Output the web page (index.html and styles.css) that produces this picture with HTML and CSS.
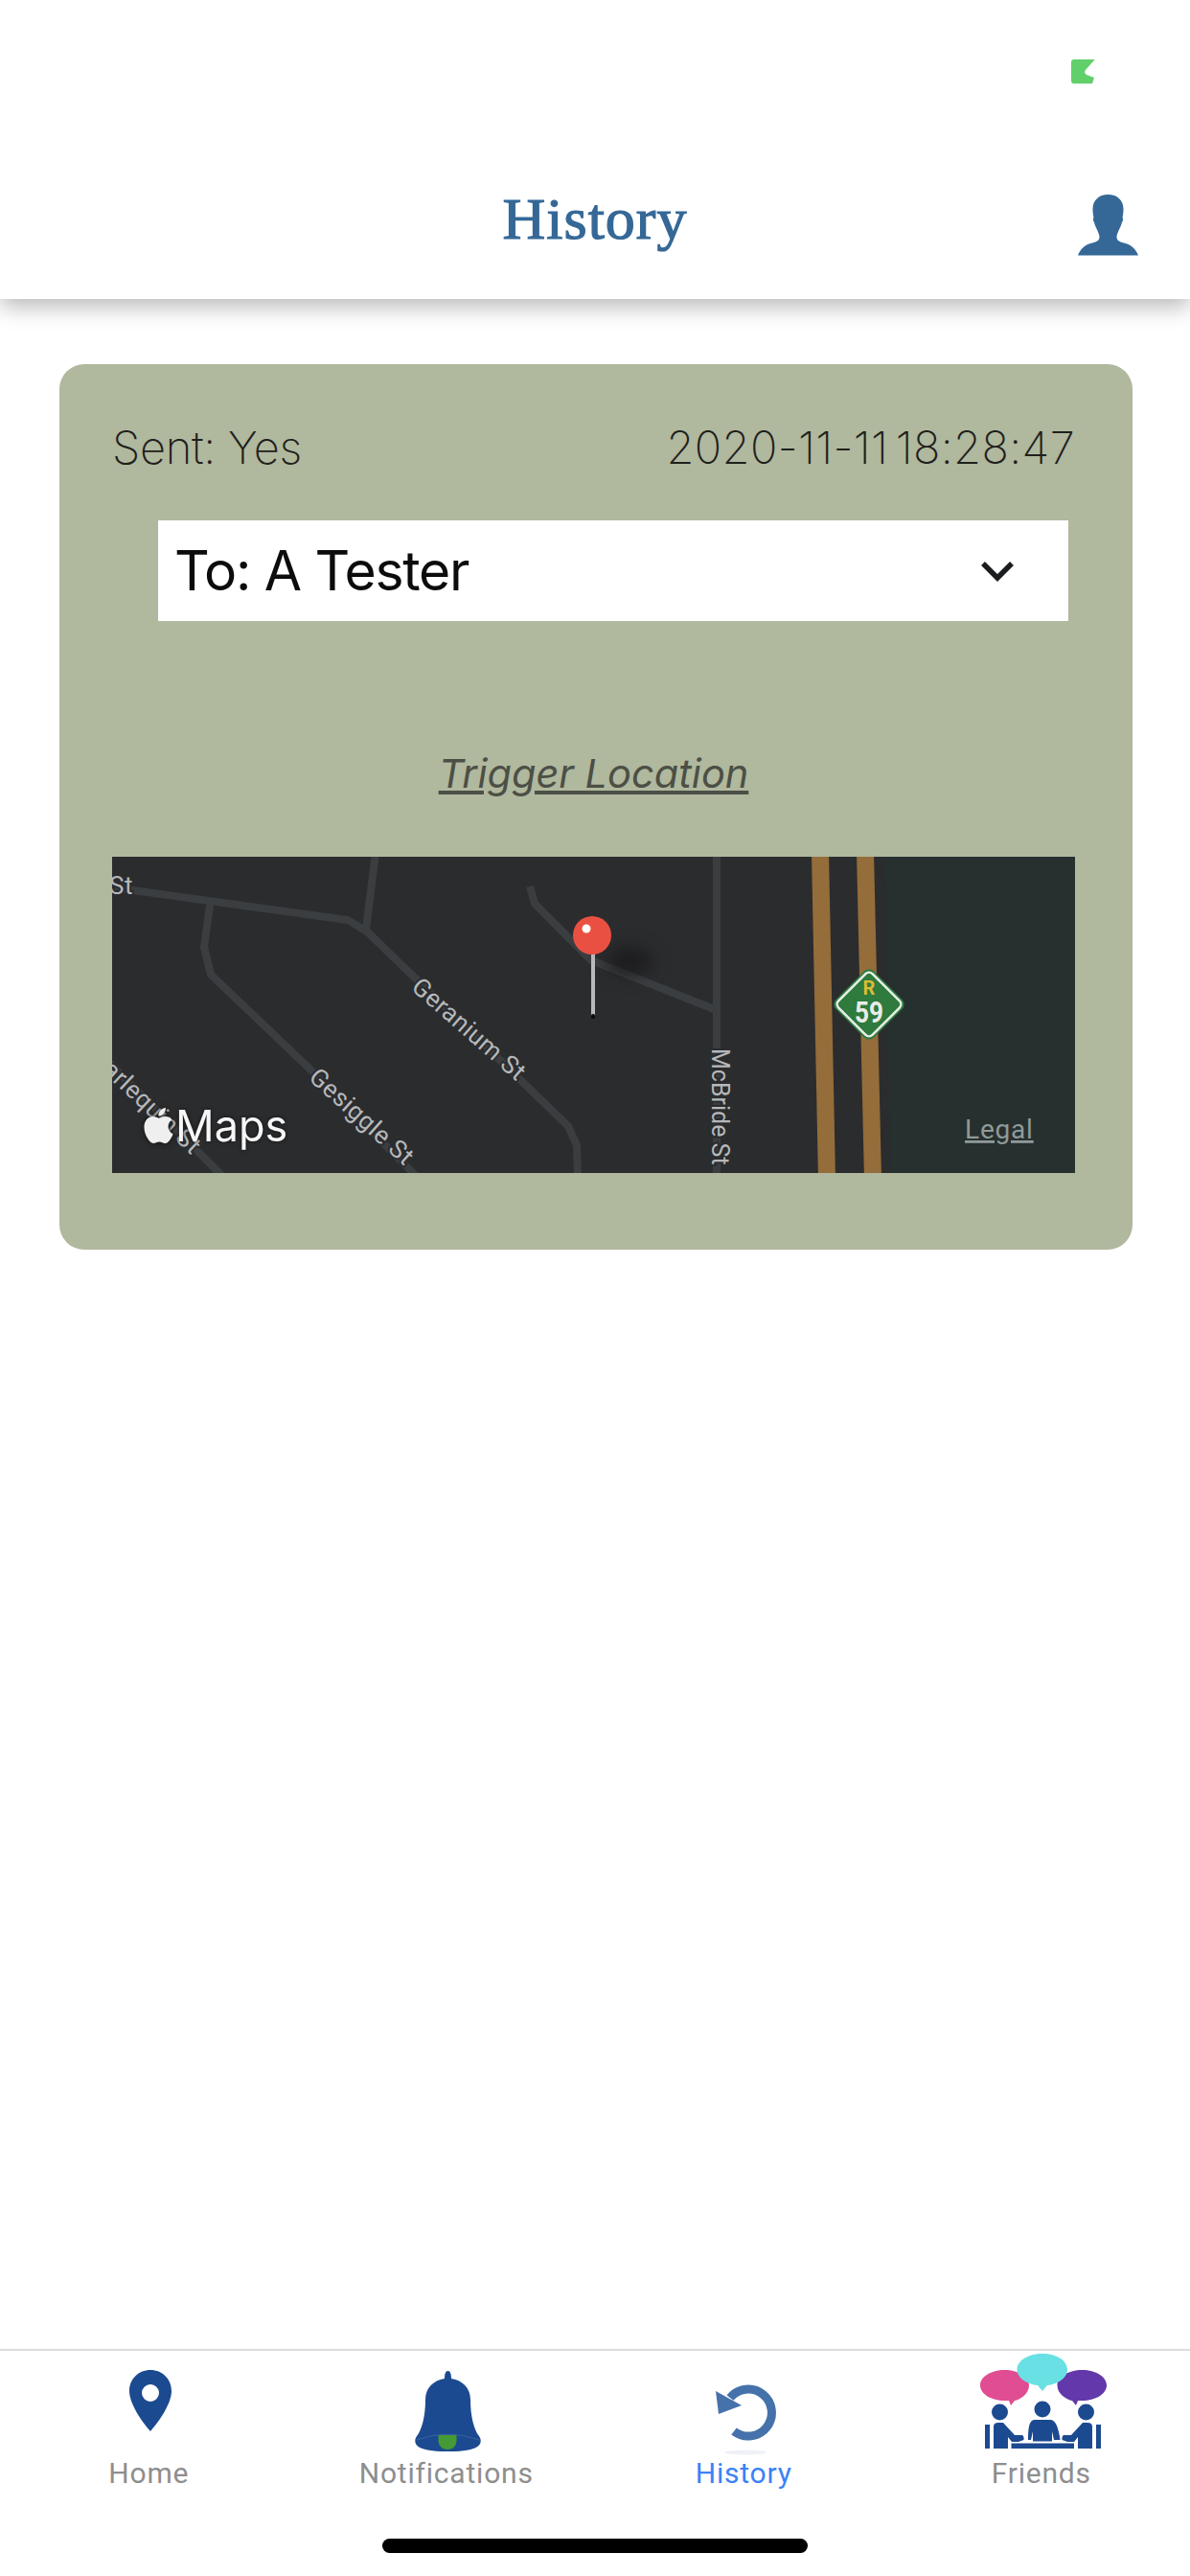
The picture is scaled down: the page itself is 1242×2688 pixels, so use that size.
FILE: index.html
```html
<!DOCTYPE html>
<html lang="en">

<head>
    <meta charset="UTF-8">
    <meta name="viewport" content="width=device-width, initial-scale=1.0">
    <title>History</title>
    <link rel="stylesheet" href="styles.css">
</head>

<body>
    <header class="topbar">
        <div class="status">
            <svg class="status-mark" viewBox="0 0 25 26">
                <path d="M3 0H24.7L15 11Q13 14 16 16L24 19L22 25.3H3Q0 25.3 0 22V3Q0 0 3 0Z" />
            </svg>
        </div>
        <div class="nav">
            <span></span>
            <h1 class="title">History</h1>
            <svg class="profile" viewBox="0 0 63 64">
                <path d="M31.5 0C41 0 47.5 6 47.5 15C47.5 19 47 22 46.5 24C47.5 25 47 28 46 29C44.5 35 41 39 40.5 44C40.5 48 43 49 48 50.5C55 52 60 56 63 63.5H0C3 56 8 52 15 50.5C20 49 22.5 48 22.5 44C22 39 18.5 35 17 29C16 28 15.5 25 16.5 24C16 22 15.5 19 15.5 15C15.5 6 22 0 31.5 0Z" />
            </svg>
        </div>
    </header>

    <main class="content">
        <section class="card">
            <div class="card-head">
                <span class="sent">Sent: Yes</span>
                <span class="stamp">2020-11-11 18:28:47</span>
            </div>
            <div class="select">
                <span class="select-text">To: A Tester</span>
                <svg class="chevron" viewBox="0 0 36 22">
                    <path d="M3 3L18 18L33 3" />
                </svg>
            </div>
            <a class="trigger" href="javascript:;">Trigger Location</a>

            <!-- viewBox uses page coordinates so the roads are easy to read off -->
            <svg class="map" viewBox="117 894 1005 330">
                <rect class="land" x="117" y="894" width="1005" height="330" />
                <path class="water" d="M923 894H1122V1224H930Z" />
                <g class="roads">
                    <path d="M110 925L363 960L383 972L593 1175L602 1195L603 1230" />
                    <path d="M220 938L213 988L220 1017L323 1115L437 1230" />
                    <path d="M392 890L382 970" />
                    <path d="M553 925L558 943L617 1002L745 1053" />
                    <path d="M748 890V1230" />
                    <path d="M110 1105L235 1230" />
                </g>
                <g class="highway">
                    <path d="M856 890L863 1230" />
                    <path d="M903 890L911 1230" />
                </g>
                <g class="street">
                    <text x="114" y="933">St</text>
                    <text transform="translate(428 1032) rotate(41)">Geranium St</text>
                    <text transform="translate(321 1126) rotate(42)">Gesiggle St</text>
                    <text transform="translate(92 1105) rotate(43)">Harlequin St</text>
                    <text class="street-tight" transform="translate(743 1094) rotate(90)">McBride St</text>
                </g>

                <rect class="shield" x="879" y="1020" width="56" height="56" rx="7" transform="rotate(45 907 1048)" />
                <rect class="shield-line" x="882" y="1023" width="50" height="50" rx="5" transform="rotate(45 907 1048)" />
                <text class="shield-r" x="907" y="1038">R</text>
                <text class="shield-num" x="892" y="1067" textLength="30" lengthAdjust="spacingAndGlyphs">59</text>

                <ellipse class="pin-shadow" cx="657" cy="1003" rx="24" ry="14" />
                <rect class="pin-stick" x="617" y="994" width="4" height="67" />
                <rect class="pin-tip" x="617" y="1058" width="4" height="5" rx="2" />
                <circle class="pin-head" cx="618" cy="976" r="20" />
                <circle class="pin-glint" cx="612" cy="969" r="4.5" />

                <svg class="apple" x="147" y="1156" width="37" height="37" viewBox="0 0 24 24">
                    <path d="M12.152 6.896c-.948 0-2.415-1.078-3.96-1.04-2.04.027-3.91 1.183-4.961 3.014-2.117 3.675-.546 9.103 1.519 12.09 1.013 1.454 2.208 3.09 3.792 3.039 1.52-.065 2.09-.987 3.935-.987 1.831 0 2.35.987 3.96.948 1.637-.026 2.676-1.48 3.676-2.948 1.156-1.688 1.636-3.325 1.662-3.415-.039-.013-3.182-1.221-3.22-4.857-.026-3.04 2.48-4.494 2.597-4.559-1.429-2.09-3.623-2.324-4.39-2.376-2-.156-3.675 1.09-4.61 1.09zM15.53 3.83c.843-1.012 1.4-2.427 1.245-3.83-1.207.052-2.662.805-3.532 1.818-.78.896-1.454 2.338-1.273 3.714 1.338.104 2.715-.688 3.559-1.701" />
                </svg>
                <text class="maps-word" x="183" y="1191">Maps</text>
                <text class="legal" x="1007" y="1188">Legal</text>
            </svg>
        </section>
    </main>

    <footer class="tabbar">
        <nav class="tabs">
            <a class="tab" href="javascript:;">
                <span class="tab-icon">
                    <svg class="icon-home" viewBox="0 0 44 64">
                        <path fill-rule="evenodd" d="M22 0C34 0 44 9 44 22C44 35 31 54 22 64C13 54 0 35 0 22C0 9 10 0 22 0ZM22 15A9 9 0 1 0 22 33A9 9 0 1 0 22 15Z" />
                    </svg>
                </span>
                <span>Home</span>
            </a>
            <a class="tab" href="javascript:;">
                <span class="tab-icon">
                    <svg class="icon-bell" viewBox="0 0 69 84">
                        <path class="bell-body" d="M34.5 0C37 0 38 3 38 8C50 10 58 18 58 30C58 48 62 62 67 68C71 74 68 80 58 82C44 85 25 85 11 82C1 80 -2 74 2 68C7 62 11 48 11 30C11 18 19 10 31 8C31 3 32 0 34.5 0Z" />
                        <path class="bell-rim" d="M2 72Q34 60 67 72" />
                        <path class="bell-clapper" d="M24.5 67H43.5V72C43.5 78 40 82 34 82C28 82 24.5 78 24.5 72Z" />
                    </svg>
                </span>
                <span>Notifications</span>
            </a>
            <a class="tab active" href="javascript:;">
                <span class="tab-icon">
                    <svg class="icon-history" viewBox="0 0 63 74">
                        <path class="history-arc" d="M15 14A24.5 24.5 0 1 1 19 49" />
                        <path class="history-head" d="M0 7L3 31L27 22Z" />
                        <ellipse class="history-under" cx="31" cy="71" rx="22" ry="2.5" />
                    </svg>
                </span>
                <span>History</span>
            </a>
            <a class="tab" href="javascript:;">
                <span class="tab-icon">
                    <svg class="icon-friends" viewBox="0 0 132 100">
                        <path class="talk-pink" d="M25.5 17C39.5 17 51 24 51 33C51 42 42 48 36 49L32 54L30 49H25.5C11.5 49 0 42 0 33C0 24 11.5 17 25.5 17Z" />
                        <path class="talk-purple" d="M106.5 17C120.5 17 132 24 132 33C132 42 120.5 49 106.5 49H102L100 54L96 49C90 48 80.5 42 80.5 33C80.5 24 92.5 17 106.5 17Z" />
                        <path class="talk-cyan" d="M65 0C79.5 0 91 7 91 16.5C91 26 80 32 70 33L65 39L60 33C50 32 38.5 26 38.5 16.5C38.5 7 50.5 0 65 0Z" />
                        <g class="people">
                            <circle cx="65" cy="58" r="8.5" />
                            <circle cx="20.5" cy="61" r="8.5" />
                            <circle cx="110.5" cy="61" r="8.5" />
                            <path d="M57 69H73C79 69 82 78 83.5 90H77L75 81V91.5H55V81L53 90H50C50 78 51 69 57 69Z" />
                            <path d="M32.5 93.5H98V99H32.5Z" />
                            <path d="M5 74H10V99H5Z" />
                            <path d="M121 74H126V99H121Z" />
                            <path d="M14 76Q14 72 19 72H24L36 85H44Q46 86 45.5 90L40 92H33L29 87V99H14Z" />
                            <path d="M117 76Q117 72 112 72H107L95 85H87Q85 86 85.5 90L91 92H98L102 87V99H117Z" />
                        </g>
                    </svg>
                </span>
                <span>Friends</span>
            </a>
        </nav>
        <div class="home-bar"></div>
    </footer>
</body>

</html>
```

FILE: styles.css
```css
* {
    margin: 0;
    padding: 0;
    box-sizing: border-box;
}

body {
    display: flex;
    flex-direction: column;
    width: 1242px;
    height: 2688px;
    background-color: #fff;
    font-family: "Inter", "Liberation Sans", sans-serif;
    overflow: hidden;
}

a {
    text-decoration: none;
    color: inherit;
}

/* top */
.topbar {
    position: relative;
    height: 312px;
    background-color: #fff;
    box-shadow: 0 8px 22px rgba(0, 0, 0, 0.28);
}

.status {
    display: flex;
    justify-content: flex-end;
    height: 190px;
    padding: 62px 99px 0 0;
}

.status-mark {
    width: 25px;
    height: 26px;
    fill: #62d06a;
}

.nav {
    display: grid;
    grid-template-columns: 1fr auto 1fr;
    align-items: start;
    padding: 0 54px;
}

.title {
    margin-top: 2px;
    font-family: "Liberation Serif", serif;
    font-size: 62px;
    line-height: 72px;
    font-weight: 400;
    letter-spacing: 1px;
    color: #356897;
    -webkit-text-stroke: 1.2px #356897;
}

.profile {
    justify-self: end;
    width: 63px;
    height: 64px;
    margin-top: 13px;
    fill: #356897;
}

/* card */
.content {
    flex: 1;
    padding: 68px 60px 0 62px;
}

.card {
    height: 924px;
    padding: 57px 60px 0 55px;
    border-radius: 26px;
    background-color: #b0b89e;
}

.card-head {
    display: flex;
    justify-content: space-between;
    align-items: center;
    height: 58px;
    font-size: 47px;
    font-weight: 200;
    color: #1f211c;
}

.sent {
    letter-spacing: -0.3px;
}

.stamp {
    letter-spacing: 0.35px;
    word-spacing: -6px;
}

.select {
    display: flex;
    justify-content: space-between;
    align-items: center;
    height: 105px;
    margin: 48px 7px 0 48px;
    padding: 0 56px 0 17px;
    background-color: #fff;
    font-size: 57px;
    color: #0c0c0c;
}

.select-text {
    letter-spacing: -1.3px;
}

.chevron {
    width: 36px;
    height: 22px;
    fill: none;
    stroke: #1b1c1f;
    stroke-width: 5.5;
}

.trigger {
    display: block;
    margin-top: 134px;
    text-align: center;
    font-size: 41.5px;
    line-height: 50px;
    font-style: italic;
    text-decoration: underline;
    color: #4c4f45;
}

.map {
    display: block;
    width: 1005px;
    height: 330px;
    margin-top: 62px;
    font-family: "Roboto", "Liberation Sans", sans-serif;
}

.land {
    fill: #2b2c2e;
}

.water {
    fill: #26302f;
}

.roads path {
    fill: none;
    stroke: #3b3e41;
    stroke-width: 8;
}

.highway path {
    fill: none;
    stroke: #946d3a;
    stroke-width: 18;
}

.street text {
    font-size: 26px;
    letter-spacing: 0.5px;
    fill: #b5b8ba;
    stroke: #2b2c2e;
    stroke-width: 4px;
    paint-order: stroke;
}

.street .street-tight {
    font-size: 25px;
    letter-spacing: 0;
}

.shield {
    fill: #2f7a3d;
}

.shield-line {
    fill: none;
    stroke: #e8efe8;
    stroke-width: 2.5;
}

.shield-r {
    font-size: 20px;
    font-weight: 700;
    text-anchor: middle;
    fill: #d9bd33;
}

.shield-num {
    font-size: 31px;
    font-weight: 700;
    fill: #e9ece9;
}

.pin-shadow {
    fill: #1c1c1e;
    filter: blur(9px);
}

.pin-stick {
    fill: #b9b9bb;
}

.pin-tip {
    fill: #0c0c0c;
}

.pin-head {
    fill: #ea5041;
}

.pin-glint {
    fill: #fff;
}

.apple {
    fill: #efefef;
    filter: drop-shadow(0 0 2px #111);
}

.maps-word {
    font-family: "Inter", "Liberation Sans", sans-serif;
    font-size: 45px;
    fill: #f6f6f6;
    filter: drop-shadow(0 0 2px #111);
}

.legal {
    font-size: 28px;
    letter-spacing: 0.8px;
    text-decoration: underline;
    fill: #8f9a99;
}

/* bottom tabs */
.tabbar {
    border-top: 2px solid #dcdcdc;
}

.tabs {
    display: grid;
    grid-template-columns: repeat(4, 1fr);
    height: 196px;
}

.tab {
    display: flex;
    flex-direction: column;
    align-items: center;
    font-family: "Roboto", "Liberation Sans", sans-serif;
    font-size: 30px;
    line-height: 36px;
    letter-spacing: 0.8px;
    color: #8e8e8e;
}

.tab.active {
    color: #3b82f6;
}

.tab-icon {
    display: flex;
    justify-content: center;
    height: 110px;
    margin-left: 4px;
}

.icon-home {
    width: 44px;
    height: 64px;
    margin-top: 20px;
    fill: #1c4a90;
}

.icon-bell {
    width: 69px;
    height: 84px;
    margin-top: 21px;
}

.bell-body {
    fill: #1c4a90;
}

.bell-rim {
    fill: none;
    stroke: #3a639f;
    stroke-width: 1;
}

.bell-clapper {
    fill: #449a35;
}

.icon-history {
    width: 63px;
    height: 74px;
    margin-top: 35px;
}

.history-arc {
    fill: none;
    stroke: #4672ab;
    stroke-width: 9;
}

.history-head {
    fill: #4672ab;
}

.history-under {
    fill: #eef1f6;
}

.icon-friends {
    width: 132px;
    height: 100px;
    margin-top: 3px;
}

.talk-pink {
    fill: #e04d92;
}

.talk-purple {
    fill: #6238aa;
}

.talk-cyan {
    fill: #69e0e3;
}

.people {
    fill: #1c4a90;
}

.home-bar {
    width: 444px;
    height: 15px;
    margin: 0 auto 24px;
    border-radius: 8px;
    background-color: #000;
}
```
